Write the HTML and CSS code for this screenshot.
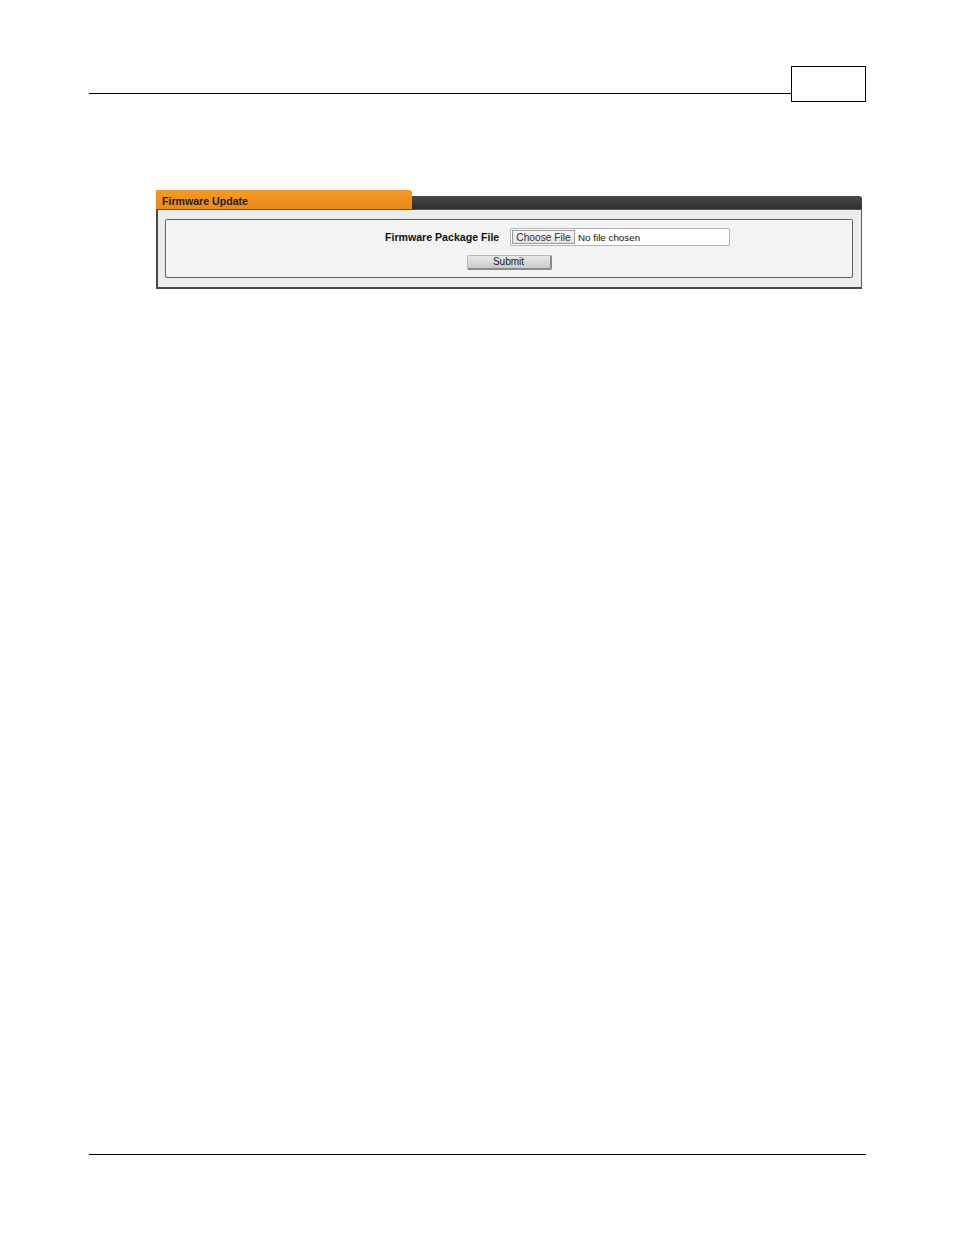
FILE: index.html
```html
<!DOCTYPE html>
<html>
<head>
<meta charset="utf-8">
<link rel="stylesheet" href="styles.css">
</head>
<body>
<div class="page">
  <div class="header">
    <div class="rule"></div>
    <div class="pagebox"></div>
  </div>
  <div class="panel">
    <div class="tabrow">
      <div class="tab">Firmware Update</div>
      <div class="bar"></div>
    </div>
    <div class="body">
      <div class="inner">
        <div class="row">
          <span class="label">Firmware Package File</span>
          <span class="file"><span class="choose">Choose File</span><span class="nofile">No file chosen</span></span>
        </div>
        <div class="submitrow">
          <span class="submit">Submit</span>
        </div>
      </div>
    </div>
  </div>
  <div class="footer"></div>
</div>
</body>
</html>
```
FILE: styles.css
```css
html, body {
  margin: 0;
  padding: 0;
  background: #fff;
}
body {
  font-family: "Liberation Sans", Arial, sans-serif;
  color: #111;
}
.page {
  width: 777px;
  margin-left: 89px;
  padding-top: 66px;
}
.header {
  display: flex;
  align-items: flex-start;
}
.rule {
  flex: 1;
  height: 27px;
  border-bottom: 1px solid #000;
}
.pagebox {
  width: 75px;
  height: 36px;
  box-sizing: border-box;
  border: 1px solid #000;
}
.panel {
  margin-top: 88px;
  margin-left: 67px;
  width: 706px;
}
.tabrow {
  display: flex;
  align-items: flex-end;
  height: 19px;
}
.tab {
  width: 256px;
  height: 19px;
  box-sizing: border-box;
  background: linear-gradient(#f39a2a, #ec8a14);
  border-top-right-radius: 3px;
  border-top-left-radius: 1px;
  font-size: 10.6px;
  font-weight: bold;
  color: #1e1e1e;
  padding: 5px 0 0 6px;
  line-height: 12px;
}
.bar {
  flex: 1;
  height: 13px;
  background: linear-gradient(#4a4a4a, #2e2e2e);
  border-top-right-radius: 3px;
}
.body {
  height: 80px;
  box-sizing: border-box;
  background: #ececec;
  border: 1px solid #5a5a5a;
  border-top: 1px solid #555;
  border-left: 2px solid #4a4a4a;
  border-bottom: 2px solid #4a4a4a;
  padding: 9px 8px 0 7px;
}
.inner {
  height: 59px;
  box-sizing: border-box;
  border: 1px solid #5e5e5e;
  border-radius: 2px;
  background: #f3f3f3;
  box-shadow: inset 1px 1px 0 #fff;
  padding-top: 8px;
}
.row {
  display: flex;
  align-items: center;
  height: 18px;
  padding-left: 219px;
}
.label {
  font-size: 10.6px;
  font-weight: bold;
  color: #111;
  width: 125px;
}
.file {
  display: flex;
  align-items: center;
  width: 220px;
  height: 18px;
  box-sizing: border-box;
  background: #fff;
  border: 1px solid #b5b5b5;
  border-radius: 2px;
  padding-left: 1px;
}
.choose {
  height: 14px;
  width: 63px;
  box-sizing: border-box;
  background: linear-gradient(#f6f6f6, #e2e2e2);
  border: 1px solid #9a9a9a;
  font-size: 10.2px;
  line-height: 13px;
  color: #333;
  text-align: center;
}
.nofile {
  font-size: 9.8px;
  line-height: 13px;
  color: #111;
  margin-left: 3px;
}
.submitrow {
  display: flex;
  justify-content: center;
  margin-top: 9px;
}
.submit {
  width: 85px;
  height: 15px;
  box-sizing: border-box;
  background: linear-gradient(#e8e8e8, #c9c9c9);
  border: 1px solid #b8b8b8;
  border-right: 2px solid #8a8a8a;
  border-bottom: 2px solid #8a8a8a;
  border-radius: 2px;
  font-size: 10px;
  line-height: 12px;
  color: #222;
  text-align: center;
}
.footer {
  margin-top: 865px;
  height: 0;
  border-top: 1px solid #000;
}
```
